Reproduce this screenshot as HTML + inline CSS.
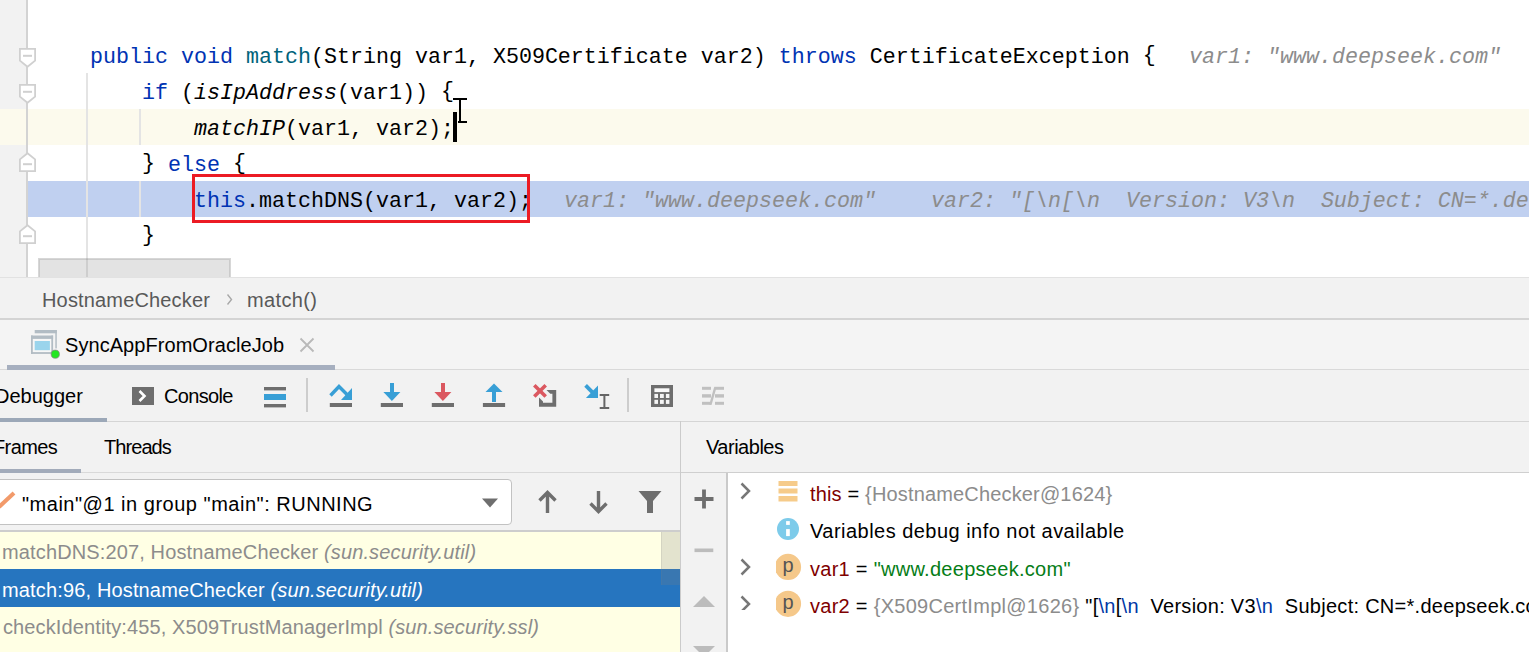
<!DOCTYPE html>
<html><head><meta charset="utf-8">
<style>
*{margin:0;padding:0;box-sizing:border-box}
html,body{width:1529px;height:652px;overflow:hidden;background:#f2f2f2}
body{position:relative;font-family:"Liberation Sans",sans-serif}
.a{position:absolute}
.code{position:absolute;left:0;transform:translateY(3px);white-space:pre;font-family:"Liberation Mono",monospace;font-size:21.66px;line-height:36px;height:36px;color:#000}
.kw{color:#0033b3}
.fn{color:#00627a}
.it{font-style:italic}
.br{position:relative;top:-2px}
.hint{color:#8c8c8c;font-style:italic}
.ui{position:absolute;white-space:pre;font-family:"Liberation Sans",sans-serif;font-size:20px;line-height:24px;color:#000}
</style></head><body>

<!-- ============ EDITOR ============ -->
<div class="a" style="left:0;top:0;width:1529px;height:277px;background:#fff;overflow:hidden">
  <div class="a" style="left:0;top:0;width:26px;height:277px;background:#f2f2f2"></div>
  <!-- caret row -->
  <div class="a" style="left:0;top:109px;width:1529px;height:36px;background:#fcfaed"></div>
  <!-- execution point row -->
  <div class="a" style="left:28px;top:181px;width:1501px;height:36px;background:#c0d0f0"></div>
  <!-- gutter line -->
  <div class="a" style="left:26px;top:0;width:2px;height:277px;background:#d3d3d3"></div>
  <!-- indent guides -->
  <div class="a" style="left:86px;top:73px;width:2px;height:204px;background:#e4e4e4"></div>
  <div class="a" style="left:139px;top:109px;width:2px;height:36px;background:#e4e4e4"></div>
  <div class="a" style="left:139px;top:181px;width:2px;height:36px;background:#e4e4e4"></div>

  <!-- fold markers -->
  <svg class="a" style="left:0;top:0" width="60" height="277">
    <g fill="#fff" stroke="#d0d0d0" stroke-width="1.8">
      <path d="M19.9 48.9H35.1V60.6L27.5 66.8L19.9 60.6Z"/>
      <path d="M19.9 84.9H35.1V96.6L27.5 102.8L19.9 96.6Z"/>
      <path d="M19.9 171.1H35.1V159.4L27.5 153.2L19.9 159.4Z"/>
      <path d="M19.9 243.1H35.1V231.4L27.5 225.2L19.9 231.4Z"/>
    </g>
    <g fill="#d0d0d0">
      <rect x="23" y="54.8" width="9" height="2"/>
      <rect x="23" y="90.8" width="9" height="2"/>
      <rect x="23" y="163.2" width="9" height="2"/>
      <rect x="23" y="235.2" width="9" height="2"/>
    </g>
  </svg>

  <!-- code -->
  <div class="code" style="top:37px;left:90px"><span class="kw">public</span> <span class="kw">void</span> <span class="fn">match</span>(String var1, X509Certificate var2) <span class="kw">throws</span> CertificateException <span class="br">{</span></div>
  <div class="code hint" style="top:37px;left:1189px">var1: "www.deepseek.com"</div>
  <div class="code" style="top:73px;left:142px"><span class="kw">if</span> (<span class="it">isIpAddress</span>(var1)) <span class="br">{</span></div>
  <div class="code" style="top:109px;left:194px"><span class="it">matchIP</span>(var1, var2);</div>
  <div class="code" style="top:145px;left:142px"><span class="br">}</span> <span class="kw">else</span> <span class="br">{</span></div>
  <div class="code" style="top:181px;left:194px"><span class="kw">this</span>.matchDNS(var1, var2);</div>
  <div class="code hint" style="top:181px;left:564px">var1: "www.deepseek.com"</div>
  <div class="code hint" style="top:181px;left:931px">var2: "[\n[\n  Version: V3\n  Subject: CN=*.deepseek.com</div>
  <div class="code" style="top:217px;left:142px"><span class="br">}</span></div>

  <!-- red box -->
  <div class="a" style="left:192px;top:174px;width:338px;height:49px;border:3px solid #ec1b24"></div>
  <!-- caret -->
  <div class="a" style="left:453px;top:112px;width:4px;height:30px;background:#000"></div>
  <!-- I-beam -->
  <svg class="a" style="left:450px;top:95px" width="20" height="30">
    <g fill="#000">
      <rect x="3" y="3" width="14" height="2"/>
      <rect x="9" y="3" width="2" height="24"/>
      <rect x="8" y="26" width="9" height="2"/>
    </g>
  </svg>
  <!-- h scrollbar thumb -->
  <div class="a" style="left:38px;top:258px;width:193px;height:19px;background:rgba(128,128,128,0.22);border:1px solid rgba(0,0,0,0.05);border-bottom:0"><div class="a" style="left:0;top:0;right:0;bottom:0;border:1.5px solid rgba(0,0,0,0.1);border-bottom:0"></div></div>
</div>

<!-- ============ BREADCRUMBS ============ -->
<div class="a" style="left:0;top:277px;width:1529px;height:1px;background:#e2e2e2"></div>
<div class="a" style="left:0;top:320px;width:1529px;height:49px;background:#f4f4f4"></div>
<div class="ui" style="left:42px;top:288px;color:#595959;letter-spacing:0.16px">HostnameChecker</div>
<svg class="a" style="left:224px;top:290px" width="12" height="20"><path d="M3.5 4.5L7.5 9.5L3.5 14.5" fill="none" stroke="#a8a8a8" stroke-width="1.4"/></svg>
<div class="ui" style="left:247px;top:288px;color:#595959;letter-spacing:0.37px">match()</div>
<div class="a" style="left:0;top:318px;width:1529px;height:2px;background:#d4d4d4"></div>

<!-- ============ RUN TAB ROW ============ -->
<svg class="a" style="left:28px;top:328px" width="34" height="32">
  <g fill="#b2bcc4"><rect x="6.7" y="2" width="22.1" height="3.3"/><rect x="27.3" y="2" width="1.5" height="18.4"/></g>
  <rect x="3" y="7.5" width="22.1" height="18.4" fill="#f7f7f7"/>
  <g fill="#b2bcc4"><rect x="3" y="7.5" width="22.1" height="3.4"/><rect x="3" y="7.5" width="1.8" height="18.4"/><rect x="23.3" y="7.5" width="1.8" height="18.4"/><rect x="3" y="24.1" width="22.1" height="1.8"/></g>
  <rect x="6.7" y="13" width="15.2" height="9.2" fill="#9ad4ec"/>
  <circle cx="27.3" cy="26.2" r="4.1" fill="#22e622" stroke="#8a7f8a" stroke-width="0.7"/>
</svg>
<div class="ui" style="left:65px;top:333px;color:#000;letter-spacing:0.06px">SyncAppFromOracleJob</div>
<svg class="a" style="left:298px;top:336px" width="18" height="18"><path d="M2.5 2.5L15.5 15.5M15.5 2.5L2.5 15.5" stroke="#b9b9b9" stroke-width="1.8"/></svg>
<div class="a" style="left:0;top:369px;width:1529px;height:1px;background:#d9d9d9"></div>
<div class="a" style="left:7px;top:365px;width:328px;height:5px;background:#a6afbf"></div>

<!-- ============ DEBUGGER TOOLBAR ============ -->
<div class="ui" style="left:-5px;top:384px">Debugger</div>
<div class="a" style="left:0;top:418px;width:107px;height:4px;background:#9ca8b8"></div>
<div class="a" style="left:107px;top:421px;width:1422px;height:1px;background:#d5d5d5"></div>
<svg class="a" style="left:132px;top:387px" width="22" height="18"><rect width="22" height="18" fill="#6e6e6e"/><path d="M7.5 4L12.5 9L7.5 14" fill="none" stroke="#fff" stroke-width="2.6"/></svg>
<div class="ui" style="left:164px;top:384px;letter-spacing:-0.67px">Console</div>
<svg class="a" style="left:264px;top:386px" width="22" height="22"><rect x="0" y="1" width="22" height="3.4" fill="#6e6e6e"/><rect x="0" y="8" width="22" height="6" fill="#389fd6"/><rect x="0" y="18" width="22" height="3.4" fill="#6e6e6e"/></svg>
<div class="a" style="left:306px;top:378px;width:2px;height:34px;background:#cdcdcd"></div>
<!-- step over -->
<svg class="a" style="left:328px;top:380px" width="26" height="30">
  <rect x="1.8" y="23" width="22.2" height="4" fill="#6e6e6e"/>
  <path d="M2.5 15.5L11 6.5L19 14.5" fill="none" stroke="#389fd6" stroke-width="3.4"/>
  <path d="M24 8V20H13Z" fill="#389fd6"/>
</svg>
<!-- step into -->
<svg class="a" style="left:380px;top:380px" width="26" height="30">
  <rect x="0.8" y="23" width="22.2" height="4" fill="#6e6e6e"/>
  <rect x="10" y="3" width="4" height="10" fill="#389fd6"/>
  <path d="M3.4 12H20.4L11.9 21Z" fill="#389fd6"/>
</svg>
<!-- force step into -->
<svg class="a" style="left:431px;top:380px" width="26" height="30">
  <rect x="0.8" y="23" width="22.2" height="4" fill="#6e6e6e"/>
  <rect x="10" y="3" width="4" height="10" fill="#db5860"/>
  <path d="M3.4 12H20.4L11.9 21Z" fill="#db5860"/>
</svg>
<!-- step out -->
<svg class="a" style="left:482px;top:380px" width="26" height="30">
  <rect x="0.9" y="23" width="22.2" height="4" fill="#6e6e6e"/>
  <rect x="10" y="11" width="4" height="11" fill="#389fd6"/>
  <path d="M3.5 12H20.5L12 3.5Z" fill="#389fd6"/>
</svg>
<!-- drop frame -->
<svg class="a" style="left:530px;top:380px" width="30" height="30">
  <path d="M16.5 10H26.2V26.8H9V17.4L13 21.4V22.8H22.4V13.8H20.3Z" fill="#6e6e6e"/>
  <path d="M4.3 5.2L15.7 16.6M15.7 5.2L4.3 16.6" stroke="#db5860" stroke-width="3.6"/>
</svg>
<!-- run to cursor -->
<svg class="a" style="left:580px;top:380px" width="34" height="32">
  <path d="M5.6 5.4L13 12.8" stroke="#389fd6" stroke-width="3.8"/>
  <path d="M18 5.6V18H5.9Z" fill="#389fd6"/>
  <g fill="#666"><rect x="19.7" y="14" width="9.5" height="2"/><rect x="23.4" y="14" width="2" height="14.5"/><rect x="19.7" y="27" width="9.5" height="2"/></g>
</svg>
<div class="a" style="left:627px;top:378px;width:2px;height:34px;background:#cdcdcd"></div>
<!-- evaluate -->
<svg class="a" style="left:651px;top:385px" width="23" height="23">
  <rect x="0" y="0" width="22" height="22" fill="#6e6e6e"/>
  <rect x="3.4" y="3.3" width="15" height="3.8" fill="#fafafa"/>
  <g fill="#f5f5f5"><rect x="3.4" y="8.9" width="3.6" height="4.1"/><rect x="9" y="8.9" width="3.8" height="4.1"/><rect x="14.9" y="8.9" width="3.5" height="4.1"/><rect x="3.4" y="14.8" width="3.6" height="4.1"/><rect x="9" y="14.8" width="3.8" height="4.1"/><rect x="14.9" y="14.8" width="3.5" height="4.1"/></g>
</svg>
<!-- trace (disabled) -->
<svg class="a" style="left:701px;top:384px" width="25" height="24">
  <g fill="#c0c0c0"><rect x="1" y="2.8" width="9" height="3"/><rect x="14" y="2.8" width="9" height="3"/><rect x="1" y="10.2" width="9" height="3.4"/><rect x="14" y="10.2" width="9" height="3.4"/><rect x="1" y="17.8" width="9" height="3"/><rect x="14" y="17.8" width="9" height="3"/></g>
  <path d="M9.4 20.8L14.4 3" fill="none" stroke="#c0c0c0" stroke-width="2.4"/>
</svg>

<!-- ============ FRAMES / VARIABLES HEADER ============ -->
<div class="ui" style="left:-7px;top:435px;letter-spacing:-0.6px">Frames</div>
<div class="ui" style="left:104px;top:435px;letter-spacing:-0.93px">Threads</div>
<div class="a" style="left:0;top:469px;width:81px;height:4px;background:#a2abba"></div>
<div class="a" style="left:81px;top:472px;width:600px;height:1px;background:#d9d9d9"></div>
<div class="a" style="left:680px;top:421px;width:1px;height:231px;background:#cbcbcb"></div>
<div class="ui" style="left:706px;top:435px;letter-spacing:-0.49px">Variables</div>
<div class="a" style="left:681px;top:472px;width:848px;height:1px;background:#cfcfcf"></div>

<!-- thread dropdown -->
<div class="a" style="left:-10px;top:479px;width:522px;height:46px;background:#fff;border:1.5px solid #c2c2c2;border-radius:4px"></div>
<svg class="a" style="left:0;top:490px" width="20" height="22"><path d="M-1 17L14 3" stroke="#f29a6a" stroke-width="4"/></svg>
<div class="ui" style="left:22px;top:492px;letter-spacing:0.51px">"main"@1 in group "main": RUNNING</div>
<svg class="a" style="left:480px;top:496px" width="20" height="14"><path d="M2 2.5H18L10 11.5Z" fill="#6e6e6e"/></svg>
<!-- up / down / filter -->
<svg class="a" style="left:536px;top:489px" width="24" height="26"><path d="M11.5 24V4M3.5 11.5L11.5 3.5L19.5 11.5" fill="none" stroke="#6e6e6e" stroke-width="3.4"/></svg>
<svg class="a" style="left:587px;top:489px" width="24" height="26"><path d="M11.5 2V22M3.5 14.5L11.5 22.5L19.5 14.5" fill="none" stroke="#6e6e6e" stroke-width="3.4"/></svg>
<svg class="a" style="left:637px;top:489px" width="26" height="26"><path d="M1.5 2H24.5L16 12V24H10V12Z" fill="#6e6e6e"/></svg>

<!-- frames list -->
<div class="a" style="left:0;top:530px;width:680px;height:2px;background:#cdcdcd"></div>
<div class="a" style="left:0;top:532px;width:680px;height:120px;background:#ffffe4"></div>
<div class="a" style="left:0;top:569px;width:680px;height:38px;background:#2675bf"></div>
<div class="a" style="left:661px;top:532px;width:19px;height:53px;background:rgba(128,128,128,0.22);border-left:1px solid rgba(128,128,128,0.15)"></div>
<div class="ui" style="left:2px;top:540px;color:#8c8c8c;letter-spacing:0.135px">matchDNS:207, HostnameChecker <i>(sun.security.util)</i></div>
<div class="ui" style="left:2px;top:578px;color:#fff;letter-spacing:0.15px">match:96, HostnameChecker <i>(sun.security.util)</i></div>
<div class="ui" style="left:3px;top:615px;color:#8c8c8c;letter-spacing:0.12px">checkIdentity:455, X509TrustManagerImpl <i>(sun.security.ssl)</i></div>

<!-- variables toolbar -->
<div class="a" style="left:726px;top:473px;width:2px;height:179px;background:#cacaca"></div>
<div class="a" style="left:728px;top:473px;width:801px;height:179px;background:#fff"></div>
<svg class="a" style="left:690px;top:485px" width="30" height="170">
  <path d="M4.5 14H23.5M14 4.5V23.5" stroke="#6e6e6e" stroke-width="3.8"/>
  <rect x="4.5" y="63.5" width="18.8" height="3.6" fill="#bcbcbc"/>
  <path d="M3 122H25L14 111Z" fill="#bcbcbc"/>
  <path d="M3 161H25L14 172Z" fill="#bcbcbc"/>
</svg>

<!-- variables tree -->
<svg class="a" style="left:738px;top:480px" width="16" height="130">
  <g fill="none" stroke="#777" stroke-width="2.5">
    <path d="M3.5 3.5L11 11L3.5 18.5"/>
    <path d="M3.5 79.5L11 87L3.5 94.5"/>
    <path d="M3.5 116.5L11 124L3.5 131.5"/>
  </g>
</svg>
<svg class="a" style="left:776px;top:478px" width="26" height="142">
  <g fill="#f6cb8a"><rect x="2.5" y="3" width="19" height="5"/><rect x="2.5" y="10.5" width="19" height="5"/><rect x="2.5" y="18" width="19" height="5.5"/></g>
  <circle cx="12" cy="51" r="11" fill="#7dcbea"/>
  <rect x="10.1" y="51.1" width="3.7" height="7" fill="#fff"/><rect x="10.1" y="43.1" width="3.7" height="3.8" fill="#fff"/>
  <circle cx="12" cy="88.9" r="13.1" fill="#f5c88a"/>
  <circle cx="12" cy="125.8" r="13.1" fill="#f5c88a"/>
</svg>
<div class="ui" style="left:778px;top:553px;color:#555;width:20px;text-align:center">p</div>
<div class="ui" style="left:778px;top:590px;color:#555;width:20px;text-align:center">p</div>
<div class="ui" style="left:810px;top:482px;letter-spacing:0.16px"><span style="color:#7f0000">this</span> = <span style="color:#8c8c8c">{HostnameChecker@1624}</span></div>
<div class="ui" style="left:810px;top:519px;letter-spacing:0.47px">Variables debug info not available</div>
<div class="ui" style="left:810px;top:557px;letter-spacing:0.28px"><span style="color:#7f0000">var1</span> = <span style="color:#067d17">"www.deepseek.com"</span></div>
<div class="ui" style="left:810px;top:594px;letter-spacing:0.28px"><span style="color:#7f0000">var2</span> = <span style="color:#8c8c8c">{X509CertImpl@1626}</span> "[<span style="color:#0037a6">\n</span>[<span style="color:#0037a6">\n</span>  Version: V3<span style="color:#0037a6">\n</span>  Subject: CN=*.deepseek.com</div>

</body></html>
